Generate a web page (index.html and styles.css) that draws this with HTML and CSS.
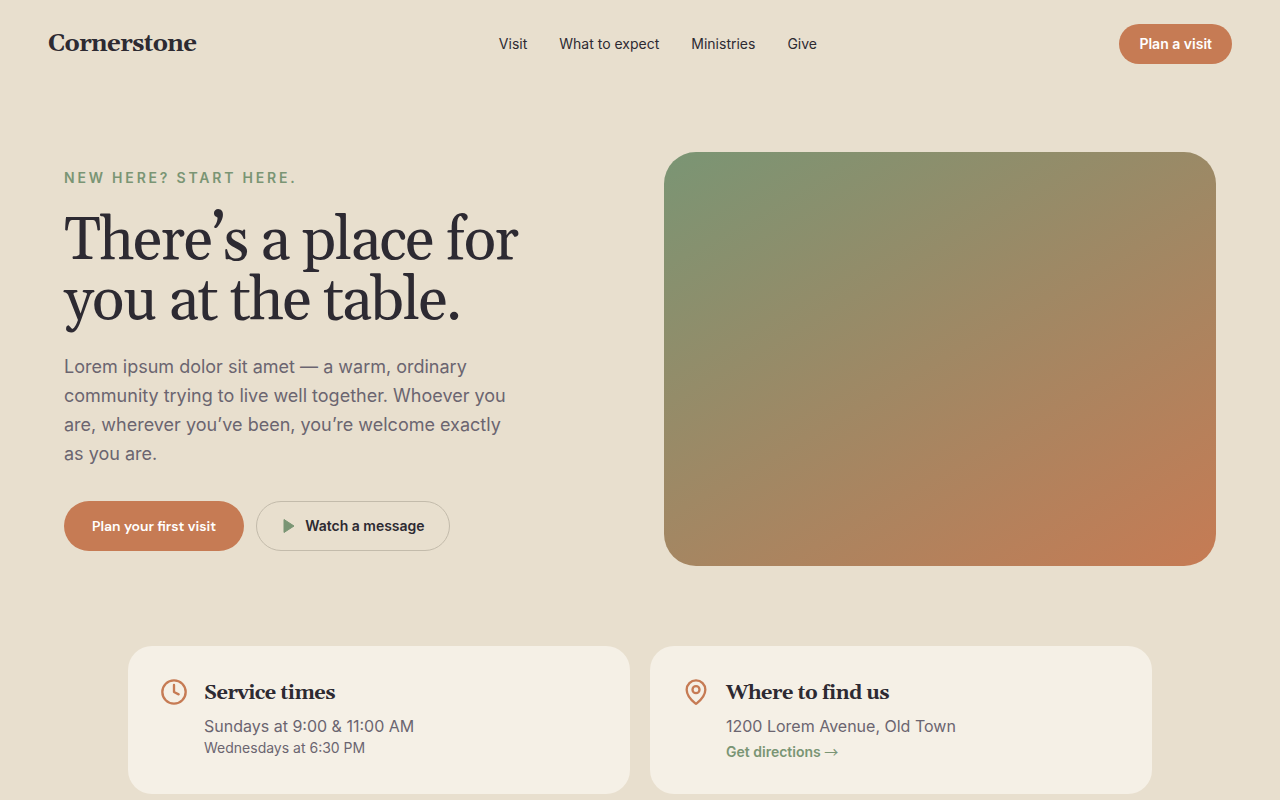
FILE: index.html
```html
<!DOCTYPE html>
<html lang="en">
<head>
    <meta charset="UTF-8">
    <meta name="viewport" content="width=device-width, initial-scale=1.0">
    <title>Cornerstone</title>
    <link rel="stylesheet" href="styles.css">
</head>
<body>
    <header class="site-header">
        <a href="#" class="logo">Cornerstone</a>
        <nav class="nav">
            <a href="#visit">Visit</a>
            <a href="#expect">What to expect</a>
            <a href="#ministries">Ministries</a>
            <a href="#give">Give</a>
        </nav>
        <button type="button" class="btn btn-small">Plan a visit</button>
    </header>

    <main>
        <section class="hero">
            <div class="hero-text">
                <p class="eyebrow">New here? Start here.</p>
                <h1>There’s a place for you at the table.</h1>
                <p class="lead">Lorem ipsum dolor sit amet — a warm, ordinary community trying to live well together. Whoever you are, wherever you’ve been, you’re welcome exactly as you are.</p>
                <div class="actions">
                    <button type="button" class="btn btn-primary">Plan your first visit</button>
                    <button type="button" class="btn btn-outline">
                        <svg class="play" width="16" height="16" viewBox="0 0 16 16" aria-hidden="true">
                            <path d="M3 1.500v13l10-6.500z"/>
                        </svg>
                        Watch a message
                    </button>
                </div>
            </div>
            <div class="hero-image"></div>
        </section>

        <section class="cards" id="visit">
            <div class="card">
                <svg class="card-icon" width="28" height="28" viewBox="0 0 24 24" aria-hidden="true">
                    <circle cx="12" cy="12" r="10"/>
                    <path d="M12 6v6l4 2"/>
                </svg>
                <div>
                    <h2>Service times</h2>
                    <p>Sundays at 9:00 &amp; 11:00 AM</p>
                    <p class="small">Wednesdays at 6:30 PM</p>
                </div>
            </div>
            <div class="card">
                <svg class="card-icon" width="28" height="28" viewBox="0 0 24 24" aria-hidden="true">
                    <path d="M20 10c0 5-5.500 10.200-7.400 11.800a1 1 0 0 1-1.200 0C9.500 20.200 4 15 4 10a8 8 0 0 1 16 0Z"/>
                    <circle cx="12" cy="10" r="3"/>
                </svg>
                <div>
                    <h2>Where to find us</h2>
                    <p>1200 Lorem Avenue, Old Town</p>
                    <a href="#directions" class="directions">Get directions <span class="arrow">→</span></a>
                </div>
            </div>
        </section>
    </main>
</body>
</html>
```
FILE: styles.css
```css
* {
    box-sizing: border-box;
}
body {
    margin: 0;
    background-color: #e8dfce;
    color: #2d2a32;
    font-family: Inter, sans-serif;
    font-size: 16px;
    line-height: 24px;
}
h1, h2, p {
    margin: 0;
}
a {
    color: inherit;
    text-decoration: none;
}
.site-header {
    display: flex;
    justify-content: space-between;
    align-items: center;
    padding: 24px 48px;
}
.logo, h1, h2 {
    font-family: Georgia, Gelasio, "Liberation Serif", serif;
    letter-spacing: -0.025em;
}
.logo {
    font-size: 24px;
    font-weight: 700;
}
.nav {
    display: flex;
    gap: 32px;
    font-size: 14px;
}
.btn {
    display: flex;
    align-items: center;
    border: none;
    border-radius: 999px;
    background-color: #c67b54;
    color: #fff;
    font-family: Inter, sans-serif;
    font-size: 14px;
    font-weight: 600;
    line-height: 20px;
    cursor: pointer;
}
.btn-small {
    padding: 10px 20px;
}
.btn-primary {
    padding: 15px 28px;
    font-family: "DM Sans", Inter, sans-serif;
}
.btn-outline {
    gap: 8px;
    padding: 14px 24px;
    border: 1px solid #c3bbab;
    background-color: transparent;
    color: #2d2a32;
}
.play {
    fill: #7a9574;
    stroke: #7a9574;
    stroke-width: 1;
    stroke-linejoin: round;
}
.hero {
    display: grid;
    grid-template-columns: 1fr 1fr;
    gap: 48px;
    align-items: center;
    max-width: 1280px;
    margin: 0 auto;
    padding: 64px 64px 80px;
}
.eyebrow {
    margin-bottom: 24px;
    color: #7a9574;
    font-size: 14px;
    font-weight: 600;
    line-height: 20px;
    letter-spacing: 0.2em;
    text-transform: uppercase;
}
h1 {
    font-size: 60px;
    font-weight: 400;
    line-height: 60px;
}
.lead {
    max-width: 448px;
    margin-top: 20px;
    color: #6b6570;
    font-size: 18px;
    line-height: 29px;
}
.actions {
    display: flex;
    gap: 12px;
    margin-top: 33px;
}
.hero-image {
    aspect-ratio: 4 / 3;
    border-radius: 32px;
    background: linear-gradient(150deg, #7a9574, #c67b54);
}
.cards {
    display: grid;
    grid-template-columns: 1fr 1fr;
    gap: 20px;
    max-width: 1024px;
    margin: 0 auto;
}
.card {
    display: flex;
    align-items: flex-start;
    gap: 16px;
    padding: 32px;
    border-radius: 24px;
    background-color: #f5f0e6;
}
.card-icon {
    flex-shrink: 0;
    fill: none;
    stroke: #c67b54;
    stroke-width: 2;
    stroke-linecap: round;
    stroke-linejoin: round;
}
.card h2 {
    margin-bottom: 6px;
    font-size: 20px;
    font-weight: 700;
    line-height: 30px;
}
.card p {
    color: #6b6570;
}
.card .small {
    font-size: 14px;
    line-height: 20px;
}
.directions {
    display: block;
    padding-top: 4px;
    color: #7a9574;
    font-size: 14px;
    font-weight: 600;
    line-height: 20px;
}
.arrow {
    font-family: "Noto Sans CJK JP", sans-serif;
    font-weight: 400;
    line-height: 16px;
}
```
